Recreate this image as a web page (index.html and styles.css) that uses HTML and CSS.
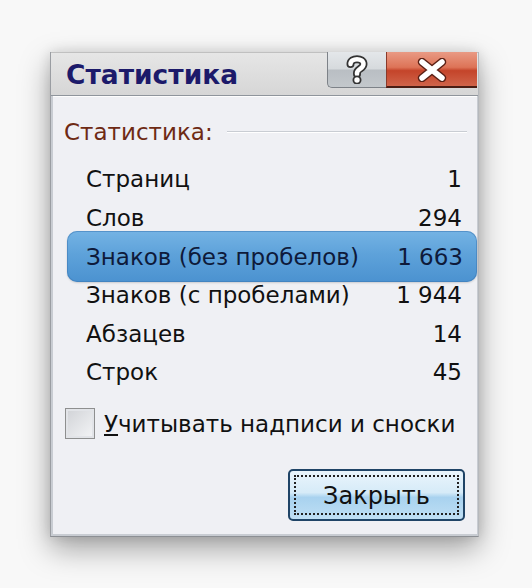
FILE: index.html
```html
<!DOCTYPE html>
<html lang="ru">
<head>
<meta charset="utf-8">
<link rel="stylesheet" href="styles.css">
</head>
<body>
<div class="dialog">
  <div class="titlebar">
    <div class="title">Статистика</div>
    <div class="caption-btns">
      <div class="btn-help">
        <svg width="26" height="30" viewBox="0 0 26 30">
          <path d="M6.5 10 C6.5 3.5 19.5 3.5 19.5 10 C19.5 15 13 14.5 13 19 L13 20" fill="none" stroke="#333" stroke-width="8" stroke-linecap="round"/>
          <path d="M6.5 10 C6.5 3.5 19.5 3.5 19.5 10 C19.5 15 13 14.5 13 19 L13 20" fill="none" stroke="#fff" stroke-width="4.5" stroke-linecap="round"/>
          <circle cx="13" cy="26" r="3.6" fill="#fff" stroke="#333" stroke-width="1.8"/>
        </svg>
      </div>
      <div class="btn-close">
        <svg width="32" height="24" viewBox="0 0 32 24">
          <path d="M6 4 L26 20 M26 4 L6 20" stroke="#5a2015" stroke-width="8.5" stroke-linecap="round"/>
          <path d="M6 4 L26 20 M26 4 L6 20" stroke="#fff" stroke-width="5.5" stroke-linecap="round"/>
        </svg>
      </div>
    </div>
  </div>
  <div class="client">
    <div class="group-head">
      <span class="group-label">Статистика:</span>
      <span class="group-line"></span>
    </div>
    <div class="rows">
      <div class="row"><span>Страниц</span><span>1</span></div>
      <div class="row"><span>Слов</span><span>294</span></div>
      <div class="row selected"><span>Знаков (без пробелов)</span><span>1 663</span></div>
      <div class="row"><span>Знаков (с пробелами)</span><span>1 944</span></div>
      <div class="row"><span>Абзацев</span><span>14</span></div>
      <div class="row"><span>Строк</span><span>45</span></div>
    </div>
    <div class="check-row">
      <span class="checkbox"></span>
      <span class="check-label"><u>У</u>читывать надписи и сноски</span>
    </div>
    <div class="footer">
      <div class="close-button"><span class="focus">Закрыть</span></div>
    </div>
  </div>
</div>
</body>
</html>
```
FILE: styles.css
```css
html, body {
  margin: 0;
  padding: 0;
}
body {
  width: 532px;
  height: 588px;
  background: #f8f8f8;
  font-family: "DejaVu Sans", Verdana, sans-serif;
  overflow: hidden;
}
.dialog {
  margin: 52px 0 0 50px;
  width: 429px;
  height: 485px;
  background: #c8ccd2;
  box-shadow: 0 12px 28px rgba(0,0,0,0.35), 0 0 12px rgba(0,0,0,0.12);
  display: flex;
  flex-direction: column;
  border-left: 1px solid #9a9da2;
  border-right: 1px solid #b5b8bc;
  border-bottom: 1px solid #8c8f94;
  box-sizing: border-box;
}
.titlebar {
  height: 44px;
  display: flex;
  justify-content: space-between;
  align-items: flex-start;
  background: linear-gradient(#e6e6e6, #d6d6d6);
  border-top: 1px solid #c0c0c0;
  border-bottom: 1px solid #8f959c;
  box-sizing: border-box;
}
.title {
  font-family: "DejaVu Sans", sans-serif;
  font-weight: bold;
  font-size: 26.5px;
  color: #1c1a6a;
  padding: 6px 0 0 15px;
}
.caption-btns {
  display: flex;
  margin-right: 1px;
  margin-top: -1px;
}
.btn-help {
  width: 59px;
  height: 36px;
  box-sizing: border-box;
  border: 1px solid #7d8288;
  border-top: none;
  border-right: none;
  border-bottom-left-radius: 5px;
  background: linear-gradient(#e4e7ea 0%, #d6dadd 48%, #b9bec3 52%, #c3c8cc 100%);
  display: flex;
  justify-content: center;
  align-items: flex-start;
  padding-top: 2px;
}
.btn-close {
  width: 91px;
  height: 36px;
  box-sizing: border-box;
  border-bottom: 2px solid #4a1d14;
  border-left: 1px solid #8a3a2a;
  background: linear-gradient(#e99a84 0%, #dd7357 45%, #c4442a 55%, #d0644a 100%);
  display: flex;
  justify-content: center;
  align-items: flex-start;
  padding-top: 6px;
}
.client {
  flex: 1;
  background: #eff0f4;
  margin: 0 1px 2px 2px;
  border-top: 1px solid #fdfdfd;
  display: flex;
  flex-direction: column;
  font-size: 23px;
  color: #111;
}
.group-head {
  display: flex;
  align-items: center;
  padding: 22px 10px 0 11px;
  height: 26px;
}
.group-label {
  color: #6e2a14;
}
.group-line {
  flex: 1;
  height: 0;
  border-top: 1px solid #c9cdd3;
  border-bottom: 1px solid #fff;
  margin-left: 14px;
}
.rows {
  margin-top: 15px;
  display: flex;
  flex-direction: column;
}
.row {
  display: flex;
  justify-content: space-between;
  height: 38.5px;
  align-items: center;
  padding: 0 15px 0 33px;
}
.row.selected {
  margin: -6px 0 -6px 14px;
  padding: 0 14px 0 19px;
  height: 51px;
  background: linear-gradient(#74b3e4 0%, #5ea2da 45%, #4b92d0 100%);
  border-radius: 10px;
  box-shadow: inset 0 0 0 1px rgba(60,120,180,0.55), 0 1px 2px rgba(0,0,0,0.15);
  color: #0e1a3a;
}
.check-row {
  display: flex;
  align-items: center;
  margin-top: 16px;
  padding-left: 12px;
  height: 32px;
}
.checkbox {
  width: 30px;
  height: 31px;
  box-sizing: border-box;
  border: 1px solid #8e8f8f;
  background: linear-gradient(135deg, #d0d2d6, #f4f5f7);
  box-shadow: inset 0 0 0 2px #e2e4e8;
  margin-right: 9px;
}
.footer {
  display: flex;
  justify-content: flex-end;
  margin-top: 29px;
  padding-right: 12px;
}
.close-button {
  width: 177px;
  height: 52px;
  box-sizing: border-box;
  border: 2px solid #1f4466;
  border-radius: 5px;
  background: linear-gradient(#eaf5fc 0%, #d6ebf8 45%, #a8d2ef 55%, #bfdff4 100%);
  padding: 4px;
  display: flex;
}
.focus {
  flex: 1;
  border: 2px dotted #222;
  display: flex;
  justify-content: center;
  align-items: center;
  padding-top: 3px;
  font-size: 24px;
  color: #111;
}
```
